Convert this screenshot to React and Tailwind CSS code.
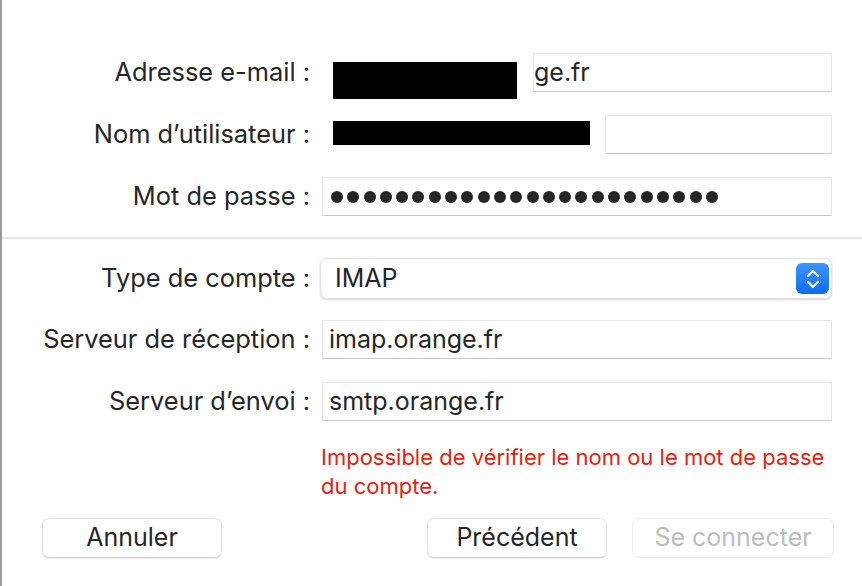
import React from 'react';

const font = { fontFamily: 'Inter, "Liberation Sans", sans-serif' };

const Field = ({ children, className = '' }) => (
  <div className={`h-[39px] bg-white border border-[#e6e6e6] border-b-[#c8c8c8] flex items-center px-[6px] text-[25px] text-[#262626] ${className}`}>
    {children}
  </div>
);

const Label = ({ children }) => (
  <div className="w-[310px] shrink-0 text-right pr-[2px] text-[25.4px] text-[#262626]">{children}</div>
);

const Stepper = () => (
  <div className="w-[33px] h-[31px] rounded-[6px] bg-gradient-to-b from-[#3f93fb] to-[#0b6cf3] flex items-center justify-center">
    <svg width="16" height="22" viewBox="0 0 16 22" fill="none" stroke="white" strokeWidth="2.4" strokeLinecap="round" strokeLinejoin="round">
      <path d="M3 8 L8 3 L13 8" />
      <path d="M3 14 L8 19 L13 14" />
    </svg>
  </div>
);

const Button = ({ children, disabled, className = '' }) => (
  <div className={`h-[40px] rounded-[7px] bg-white border flex items-center justify-center text-[25px] ${disabled ? 'text-[#bdbdbd] border-[#ececec]' : 'text-[#262626] border-[#e3e3e3] border-b-[#cfcfcf] shadow-[0_1px_1px_rgba(0,0,0,0.08)]'} ${className}`}>
    {children}
  </div>
);

export default function App() {
  return (
    <div style={font} className="w-[862px] h-[586px] bg-white border-l-2 border-[#9b9b9b] flex flex-col overflow-hidden">
      {/* account fields */}
      <div className="flex flex-col gap-[23px] pt-[53px]">
        <div className="flex items-center h-[39px]">
          <Label>Adresse e-mail :</Label>
          <div className="flex-1 flex items-start mr-[30px] h-[39px]">
            <div className="w-[184px] h-[37px] bg-black ml-[21px] mt-[9px] shrink-0" />
            <Field className="flex-1 ml-[16px] !pl-0">ge.fr</Field>
          </div>
        </div>
        <div className="flex items-center h-[39px]">
          <Label>Nom d’utilisateur :</Label>
          <div className="flex-1 flex items-start mr-[30px] h-[39px]">
            <div className="w-[257px] h-[24px] bg-black ml-[21px] mt-[6px] shrink-0" />
            <Field className="flex-1 ml-[15px]" />
          </div>
        </div>
        <div className="flex items-center h-[39px]">
          <Label>Mot de passe :</Label>
          <Field className="flex-1 ml-[10px] mr-[30px] gap-[4.3px] !px-[8px]">
            {Array.from({ length: 24 }).map((_, i) => (
              <span key={i} className="w-[12px] h-[12px] rounded-full bg-[#262626] shrink-0" />
            ))}
          </Field>
        </div>
      </div>

      <div className="h-[2px] bg-[#e6e6e6] mt-[21px]" />

      {/* server fields */}
      <div className="flex flex-col gap-[21px] pt-[19px]">
        <div className="flex items-center h-[41px]">
          <Label>Type de compte :</Label>
          <div className="flex-1 ml-[8px] mr-[30px] h-[41px] rounded-[7px] bg-white border border-[#e3e3e3] shadow-[0_1px_2px_rgba(0,0,0,0.18)] flex items-center justify-between pl-[14px] pr-[2px] text-[25px] text-[#262626]">
            <span>IMAP</span>
            <Stepper />
          </div>
        </div>
        <div className="flex items-center h-[39px]">
          <Label>Serveur de réception :</Label>
          <Field className="flex-1 ml-[10px] mr-[30px]">imap.orange.fr</Field>
        </div>
        <div className="flex items-center h-[39px] mt-[2px]">
          <Label>Serveur d’envoi :</Label>
          <Field className="flex-1 ml-[10px] mr-[30px]">smtp.orange.fr</Field>
        </div>
      </div>

      <div className="ml-[319px] mr-[28px] mt-[22px] text-[22px] leading-[29px] text-[#e3220f]">
        Impossible de vérifier le nom ou le mot de passe du compte.
      </div>

      <div className="flex items-center mt-[17px] pl-[40px] pr-[28px]">
        <Button className="w-[180px]">Annuler</Button>
        <div className="flex-1" />
        <Button className="w-[180px]">Précédent</Button>
        <Button disabled className="w-[202px] ml-[25px]">Se connecter</Button>
      </div>
    </div>
  );
}
